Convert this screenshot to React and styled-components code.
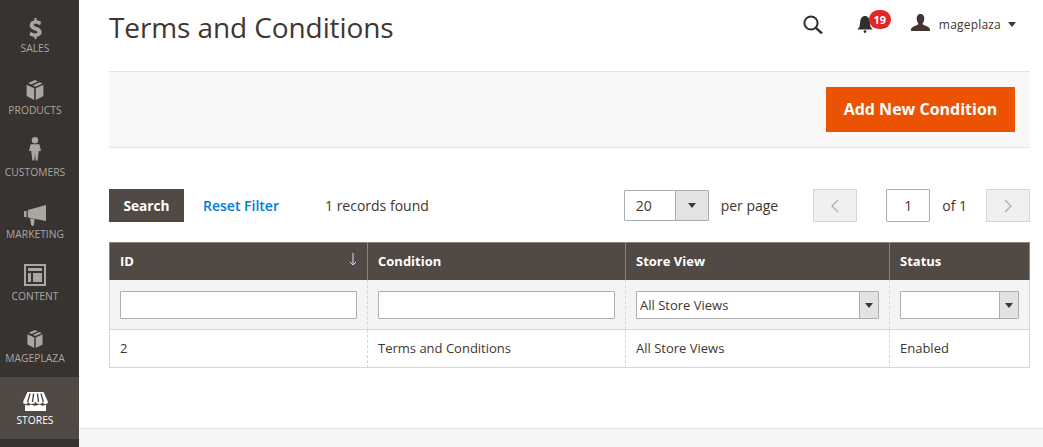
import React from 'react';
import styled, { createGlobalStyle } from 'styled-components';

const Global = createGlobalStyle`
  html, body { margin: 0; padding: 0; background: #fff; overflow: hidden; }
  body { font-family: "Open Sans", "Liberation Sans", sans-serif; color: #41362f; font-size: 14px; }
  * { box-sizing: border-box; }
`;

const Page = styled.div`
  display: flex;
  width: 1043px;
  height: 447px;
  overflow: hidden;
`;
const Sidebar = styled.nav`
  flex: 0 0 79px;
  background: #373330;
  padding-top: 5px;
`;
const NavItem = styled.div`
  height: 62px;
  padding-right: 9px;
  display: flex;
  flex-direction: column;
  align-items: center;
  background: ${p => (p.$active ? '#514943' : 'transparent')};
  color: ${p => (p.$active ? '#fff' : '#aaa6a0')};
  font-size: 10.3px;
  line-height: 14px;
  text-transform: uppercase;
  white-space: nowrap;
`;
const NavIcon = styled.div`
  height: 36px;
  padding-bottom: ${p => p.$lift}px;
  display: flex;
  align-items: flex-end;
  justify-content: center;
  svg { display: block; }
`;
const Main = styled.main`
  flex: 1;
  display: flex;
  flex-direction: column;
  min-width: 0;
`;
const Content = styled.div`
  flex: 1;
  padding: 0 13px 0 30px;
`;
const Header = styled.header`
  height: 71px;
  display: flex;
  align-items: flex-start;
  justify-content: space-between;
`;
const Title = styled.h1`
  margin: 8px 0 0;
  font-size: 28px;
  font-weight: 400;
  line-height: 38px;
  letter-spacing: -0.1px;
  color: #41362f;
`;
const HeaderTools = styled.div`
  display: flex;
  align-items: center;
  height: 48px;
  padding-right: 14px;
  color: #41362f;
`;
const ToolButton = styled.div`
  position: relative;
  display: flex;
  align-items: center;
  margin-left: ${p => p.$ml || 0}px;
`;
const Badge = styled.span`
  position: absolute;
  left: 12px;
  top: -6px;
  width: 22px;
  height: 19px;
  border-radius: 10px;
  background: #e22626;
  color: #fff;
  font-size: 11px;
  font-weight: 700;
  line-height: 19px;
  text-align: center;
`;
const UserIcon = styled.svg`
  margin-bottom: 3px;
`;
const UserName = styled.span`
  font-size: 12px;
  letter-spacing: 0.2px;
  margin-left: 9px;
  color: #41362f;
`;
const Caret = styled.span`
  width: 0;
  height: 0;
  margin-left: 7px;
  border-left: 4px solid transparent;
  border-right: 4px solid transparent;
  border-top: 5px solid #41362f;
`;
const ActionBar = styled.div`
  height: 77px;
  background: #f8f8f8;
  border-top: 1px solid #e3e3e3;
  border-bottom: 1px solid #e3e3e3;
  display: flex;
  align-items: center;
  justify-content: flex-end;
  padding-right: 15px;
`;
const PrimaryButton = styled.button`
  width: 189px;
  height: 45px;
  border: 0;
  background: #eb5202;
  color: #fff;
  font: 700 16px/45px "Open Sans", sans-serif;
  padding: 0;
`;
const Toolbar = styled.div`
  margin-top: 41px;
  height: 33px;
  display: flex;
  align-items: center;
`;
const SearchButton = styled.button`
  width: 75px;
  height: 33px;
  border: 0;
  padding: 0;
  background: #514943;
  color: #fff;
  font: 700 13.7px/33px "Open Sans", sans-serif;
`;
const ResetLink = styled.a`
  margin-left: 19px;
  color: #007bdb;
  font-weight: 600;
  font-size: 14px;
`;
const Records = styled.span`
  margin-left: 46px;
  font-size: 14px;
`;
const Spacer = styled.div`
  flex: 1;
`;
const PerPage = styled.div`
  display: flex;
  width: 85px;
  height: 31px;
  border: 1px solid #adadad;
  border-radius: 1px;
  background: #fff;
`;
const PerValue = styled.span`
  flex: 1;
  padding-left: 11px;
  line-height: 29px;
`;
const ArrowBox = styled.span`
  width: ${p => p.$w || 33}px;
  background: #e3e3e3;
  border-left: 1px solid #adadad;
  display: flex;
  align-items: center;
  justify-content: center;
  &::before {
    content: '';
    border-left: 4px solid transparent;
    border-right: 4px solid transparent;
    border-top: 5px solid #41362f;
  }
`;
const PagerText = styled.span`
  margin-left: ${p => p.$ml}px;
  font-size: 14px;
`;
const PageNav = styled.button`
  width: 44px;
  height: 33px;
  margin-left: ${p => p.$ml}px;
  padding: 0;
  background: #f0f0f0;
  border: 1px solid #d6d6d6;
  display: flex;
  align-items: center;
  justify-content: center;
`;
const PageInput = styled.div`
  width: 44px;
  height: 33px;
  margin-left: 29px;
  border: 1px solid #adadad;
  border-radius: 1px;
  text-align: center;
  line-height: 31px;
  font-size: 14px;
`;
const Grid = styled.div`
  margin-top: 20px;
  display: grid;
  grid-template-columns: 258px 258px 264px 141px;
  font-size: 13px;
`;
const HeadCell = styled.div`
  position: relative;
  height: 38px;
  background: #514943;
  color: #fff;
  font-weight: 700;
  line-height: 36px;
  padding-left: 10px;
  border-top: 1px solid #8a837f;
  border-left: 1px solid #8a837f;
  ${p => p.$last && 'border-right: 1px solid #8a837f;'}
`;
const SortArrow = styled.svg`
  position: absolute;
  right: 10px;
  top: 10px;
`;
const FilterCell = styled.div`
  height: 50px;
  background: #f4f4f4;
  padding: 11px 10px 0 10px;
  border-left: ${p => (p.$first ? '1px solid #d6d6d6' : '1px dashed #d6d6d6')};
  ${p => p.$last && 'border-right: 1px solid #d6d6d6;'}
  border-bottom: 1px solid #d6d6d6;
`;
const BodyCell = styled.div`
  height: 38px;
  line-height: 36px;
  padding-left: 10px;
  border-left: ${p => (p.$first ? '1px solid #d6d6d6' : '1px dashed #d6d6d6')};
  ${p => p.$last && 'border-right: 1px solid #d6d6d6;'}
  border-bottom: 1px solid #d6d6d6;
`;
const FilterInput = styled.div`
  height: 28px;
  background: #fff;
  border: 1px solid #adadad;
  border-radius: 1px;
`;
const FilterSelect = styled.div`
  height: 28px;
  display: flex;
  background: #fff;
  border: 1px solid #adadad;
  border-radius: 1px;
`;
const SelectValue = styled.span`
  flex: 1;
  padding-left: 3px;
  line-height: 26px;
  font-size: 13px;
`;
const Footer = styled.footer`
  height: 19px;
  background: #f5f5f5;
  border-top: 1px solid #e3e3e3;
`;

const Box = ({ w = 18, h = 20 }) => (
  <svg width={w} height={h} viewBox="0 0 18 20" fill="currentColor">
    <path d="M9 0 L12 1.4 5.2 4.4 2.2 3.1z M13.8 2.2 L16.6 3.4 9.4 6.8 6.8 5.4z" />
    <path d="M.6 4.8 L8.2 8.2 V20 L.6 16z" />
    <path d="M9.8 8.2 L17.4 4.8 V16 L9.8 20z" />
  </svg>
);
const Person = () => (
  <svg width="12" height="24" viewBox="0 0 12 24" fill="currentColor">
    <circle cx="6" cy="3.2" r="3.2" />
    <path d="M1.6 7.2 H10.4 L12 14 H9.8 L8.6 23.5 H6.7 L6 17 5.3 23.5 H3.4 L2.2 14 H0z" />
  </svg>
);
const Horn = () => (
  <svg width="22" height="22" viewBox="0 0 22 22" fill="currentColor">
    <path d="M0 6 H2.6 V12 H0z" />
    <path d="M3.8 5 L22 0 V16 L3.8 12.4z" />
    <path d="M6 13.2 L10.6 14.2 10 20 Q8.6 22 7.2 20z" />
  </svg>
);
const Layout = () => (
  <svg width="22" height="22" viewBox="0 0 22 22" fill="none" stroke="currentColor">
    <rect x="1" y="1" width="20" height="20" strokeWidth="2" />
    <path d="M4 4 H18 V7 H4z M4 9 H7 V18 H4z M9 9 H18 V18 H9z" fill="currentColor" stroke="none" />
  </svg>
);
const Store = () => (
  <svg width="25" height="19" viewBox="0 0 25 19">
    <path fill="#fff" d="M2 12.5 C4 14 6.5 13.5 8 12.5 C10 14 14 14 16.5 12.5 C18.5 14 21 14 23 12.5 V19 H2z" />
    <path fill="#fff" d="M4.5 0 H20.5 L25 10 Q25 12 22.5 12 Q20 12 19.6 10 Q19.2 12 16.5 12 Q13.5 12 12.5 10 Q11.5 12 8.5 12 Q5.8 12 5.4 10 Q5 12 2.5 12 Q0 12 0 10z" />
    <path stroke="#514943" strokeWidth="1.4" d="M7 1.6 L4.6 10 M10.6 1.6 L9.4 10 M14.4 1.6 L15.6 10 M18 1.6 L20.4 10" fill="none" />
  </svg>
);
const Dollar = () => (
  <svg width="13" height="21" viewBox="0 0 16 23" preserveAspectRatio="none" fill="currentColor">
    <path d="M6.6 0 H9.4 V2.6 C11.8 2.9 13.8 3.7 15 4.5 L13.6 8 C12 7.1 10 6.4 8 6.4 6.6 6.4 5.8 6.9 5.8 7.6 5.8 8.5 7 9 9.6 9.8 13.2 10.9 15.6 12.4 15.6 15.6 15.6 18.4 13.4 20.2 9.4 20.6 V23 H6.6 V20.7 C4.2 20.5 2 19.7 .6 18.7 L2 15 C3.8 16.1 6 16.9 8 16.9 9.6 16.9 10.4 16.4 10.4 15.6 10.4 14.7 9.3 14.2 6.4 13.3 3 12.3 .8 10.8 .8 7.8 .8 5 3 3.1 6.6 2.7z" />
  </svg>
);

const nav = [
  ['Sales', <Dollar />, 2],
  ['Products', <Box />, 3],
  ['Customers', <Person />, 4],
  ['Marketing', <Horn />, 0],
  ['Content', <Layout />, 3],
  ['Mageplaza', <Box w={18} h={18} />, 3],
  ['Stores', <Store />, 2],
];

const Chevron = ({ left }) => (
  <svg width="8" height="14" viewBox="0 0 8 14" fill="none" stroke="#adadad" strokeWidth="1.3">
    <path d={left ? 'M7 1 L1 7 7 13' : 'M1 1 L7 7 1 13'} />
  </svg>
);

export default function App() {
  return (
    <Page>
      <Global />
      <Sidebar>
        {nav.map(([label, icon, lift]) => (
          <NavItem key={label} $active={label === 'Stores'}>
            <NavIcon $lift={lift}>{icon}</NavIcon>
            {label}
          </NavItem>
        ))}
      </Sidebar>
      <Main>
        <Content>
          <Header>
            <Title>Terms and Conditions</Title>
            <HeaderTools>
              <ToolButton>
                <svg width="20" height="19" viewBox="0 0 20 19" fill="none" stroke="#332c28" strokeWidth="2">
                  <circle cx="8" cy="8" r="6.6" />
                  <path d="M12.6 12.6 L19 18.4" strokeWidth="2.4" />
                </svg>
              </ToolButton>
              <ToolButton $ml={34}>
                <svg width="16" height="17" viewBox="0 0 16 17" fill="#332c28">
                  <path d="M8 0 C5 0 3.5 2.5 3.2 5.5 L2.6 10.5 0.5 13.5 H15.5 L13.4 10.5 12.8 5.5 C12.5 2.5 11 0 8 0z" />
                  <circle cx="8" cy="15.6" r="1.4" />
                </svg>
                <Badge>19</Badge>
              </ToolButton>
              <ToolButton $ml={38}>
                <UserIcon width="19" height="17" viewBox="0 0 20 18" fill="#41362f">
                  <path d="M10 0 C13 0 14 2.4 14 5 14 7.6 12.6 9.5 12.2 10.5 13 12 19 12.5 20 16 V18 H0 V16 C1 12.5 7 12 7.8 10.5 7.4 9.5 6 7.6 6 5 6 2.4 7 0 10 0z" />
                </UserIcon>
                <UserName>mageplaza</UserName>
                <Caret />
              </ToolButton>
            </HeaderTools>
          </Header>
          <ActionBar>
            <PrimaryButton>Add New Condition</PrimaryButton>
          </ActionBar>
          <Toolbar>
            <SearchButton>Search</SearchButton>
            <ResetLink>Reset Filter</ResetLink>
            <Records>1 records found</Records>
            <Spacer />
            <PerPage>
              <PerValue>20</PerValue>
              <ArrowBox />
            </PerPage>
            <PagerText $ml={12}>per page</PagerText>
            <PageNav $ml={35}><Chevron left /></PageNav>
            <PageInput>1</PageInput>
            <PagerText $ml={12}>of 1</PagerText>
            <PageNav $ml={19}><Chevron /></PageNav>
          </Toolbar>
          <Grid>
            <HeadCell $first>
              ID
              <SortArrow width="8" height="13" viewBox="0 0 8 13" fill="none" stroke="#dcd8ff" strokeWidth="1">
                <path d="M4 0 V12 M1 9 L4 12 7 9" />
              </SortArrow>
            </HeadCell>
            <HeadCell>Condition</HeadCell>
            <HeadCell>Store View</HeadCell>
            <HeadCell $last>Status</HeadCell>

            <FilterCell $first><FilterInput /></FilterCell>
            <FilterCell><FilterInput /></FilterCell>
            <FilterCell>
              <FilterSelect>
                <SelectValue>All Store Views</SelectValue>
                <ArrowBox $w={19} />
              </FilterSelect>
            </FilterCell>
            <FilterCell $last>
              <FilterSelect>
                <SelectValue />
                <ArrowBox $w={19} />
              </FilterSelect>
            </FilterCell>

            <BodyCell $first>2</BodyCell>
            <BodyCell>Terms and Conditions</BodyCell>
            <BodyCell>All Store Views</BodyCell>
            <BodyCell $last>Enabled</BodyCell>
          </Grid>
        </Content>
        <Footer />
      </Main>
    </Page>
  );
}
